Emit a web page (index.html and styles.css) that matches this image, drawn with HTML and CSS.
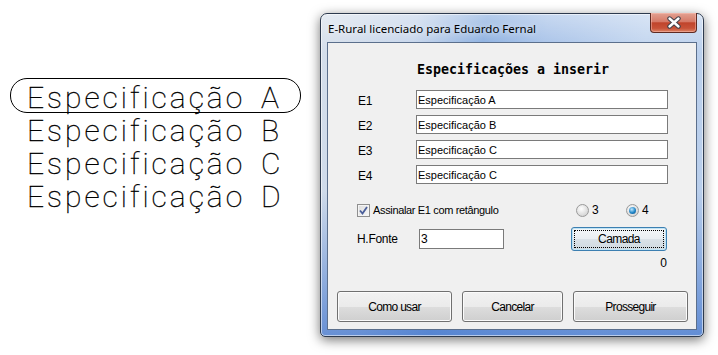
FILE: index.html
```html
<!DOCTYPE html>
<html lang="pt">
<head>
    <meta charset="UTF-8">
    <title>E-Rural</title>
    <link rel="stylesheet" href="styles.css">
</head>
<body>
    <div class="drawing">
        <div class="cad-line marked"><span class="cad-word">Especificação</span><span class="cad-letter">A</span></div>
        <div class="cad-line"><span class="cad-word">Especificação</span><span class="cad-letter">B</span></div>
        <div class="cad-line"><span class="cad-word">Especificação</span><span class="cad-letter">C</span></div>
        <div class="cad-line"><span class="cad-word">Especificação</span><span class="cad-letter">D</span></div>
    </div>

    <div class="window">
        <div class="titlebar">
            <span class="title">E-Rural licenciado para Eduardo Fernal</span>
            <button class="close-btn" type="button">
                <svg width="16" height="13" viewBox="0 0 16 13">
                    <path d="M3.5 2.5 L12.5 10.5 M12.5 2.5 L3.5 10.5" stroke="#40404a" stroke-width="4.4" stroke-linecap="round"/>
                    <path d="M3.5 2.5 L12.5 10.5 M12.5 2.5 L3.5 10.5" stroke="#ffffff" stroke-width="2.4" stroke-linecap="round"/>
                </svg>
            </button>
        </div>
        <div class="client">
            <h2 class="heading">Especificações a inserir</h2>

            <div class="fields">
                <label for="e1">E1</label>
                <input type="text" id="e1" value="Especificação A">
                <label for="e2">E2</label>
                <input type="text" id="e2" value="Especificação B">
                <label for="e3">E3</label>
                <input type="text" id="e3" value="Especificação C">
                <label for="e4">E4</label>
                <input type="text" id="e4" value="Especificação C">
            </div>

            <div class="options">
                <label class="check">
                    <span class="check-box">
                        <svg width="9" height="9" viewBox="0 0 9 9">
                            <path d="M1 4.5 L3.5 7.5 L8 1" fill="none" stroke="#4a5e9a" stroke-width="1.8"/>
                        </svg>
                    </span>
                    Assinalar E1 com retângulo
                </label>
                <label class="radio"><span class="radio-dot"></span>3</label>
                <label class="radio"><span class="radio-dot on"></span>4</label>
            </div>

            <div class="font-row">
                <label for="hfonte">H.Fonte</label>
                <input type="text" id="hfonte" class="small-input" value="3">
                <button type="button" class="camada-btn"><span>Camada</span></button>
            </div>

            <div class="layer-count">0</div>

            <div class="actions">
                <button type="button" class="win-btn wide">Como usar</button>
                <button type="button" class="win-btn">Cancelar</button>
                <button type="button" class="win-btn wide">Prosseguir</button>
            </div>
        </div>
    </div>
</body>
</html>
```

FILE: styles.css
```css
body {
    margin: 0;
    width: 718px;
    height: 355px;
    overflow: hidden;
    background-color: #fff;
    display: flex;
    font-family: "Liberation Sans", Arial, sans-serif;
    font-size: 11px;
    color: #000;
}

/* CAD drawing on the left */
.drawing {
    width: 310px;
    flex: none;
    padding: 81px 0 0 10px;
}
.cad-line {
    display: flex;
    align-items: center;
    height: 33px;
    padding-left: 17px;
    font-family: "Roboto", "DejaVu Sans", sans-serif;
    font-weight: 100;
    font-size: 30px;
    letter-spacing: 3px;
    color: #000;
    -webkit-text-stroke: 0.35px #000;
}
.cad-line.marked {
    position: relative;
}
.cad-line.marked::before {
    content: "";
    position: absolute;
    left: 0;
    top: -3px;
    width: 289px;
    height: 33px;
    border: 1px solid #000;
    border-radius: 17px;
}
.cad-word {
    width: 234px;
}

/* window frame */
.window {
    flex: none;
    margin-top: 13px;
    width: 384px;
    height: 324px;
    box-sizing: border-box;
    border: 1px solid #2d3a4e;
    border-radius: 7px 7px 5px 5px;
    padding: 0 6px 6px 6px;
    display: flex;
    flex-direction: column;
    background:
        linear-gradient(to bottom, rgba(255, 255, 255, 0.4), rgba(255, 255, 255, 0) 12%),
        linear-gradient(to bottom, rgba(80, 130, 210, 0) 55%, rgba(70, 120, 205, 0.75) 100%),
        linear-gradient(100deg, #d6dfea 0%, #c3d3ea 22%, #85abde 38%, #a3bfe7 52%, #bfd3ee 75%, #b7cdeb 100%);
    box-shadow: inset 0 0 0 1px rgba(255, 255, 255, 0.55), 0 3px 12px rgba(0, 0, 0, 0.55);
}
.titlebar {
    height: 28px;
    display: flex;
    align-items: flex-start;
    justify-content: space-between;
}
.title {
    font-family: "Noto Sans", "Open Sans", sans-serif;
    font-size: 11.5px;
    margin: 7px 0 0 1px;
    color: #000;
    text-shadow: 0 0 6px rgba(255, 255, 255, 0.9);
}
.close-btn {
    width: 47px;
    height: 20px;
    margin: -1px 0 0 0;
    border: 1px solid #5e2a22;
    border-top: none;
    border-radius: 0 0 4px 4px;
    background: linear-gradient(to bottom, #e3a292 0%, #d67a68 45%, #c0442c 52%, #c85238 80%, #dc8466 100%);
    box-shadow: inset 0 0 0 1px rgba(255, 200, 190, 0.45);
    display: flex;
    align-items: center;
    justify-content: center;
    padding: 0;
}

/* client area */
.client {
    flex: 1;
    border: 1px solid #5b6f8c;
    background-color: #f0f0f0;
    display: flex;
    flex-direction: column;
    padding: 0 29px;
}
.heading {
    margin: 19px 0 0 0;
    height: 16px;
    line-height: 16px;
    text-align: center;
    font-family: "DejaVu Sans Mono", monospace;
    font-weight: bold;
    font-size: 13.3px;
    padding-left: 2px;
}
.fields {
    margin-top: 12px;
    display: grid;
    grid-template-columns: 59px 252px;
    grid-auto-rows: 19px;
    row-gap: 6px;
    align-items: center;
}
.fields label {
    padding-left: 1px;
    padding-top: 2px;
    font-size: 12px;
    letter-spacing: -0.3px;
}
input[type="text"] {
    box-sizing: border-box;
    height: 19px;
    border: 1px solid #7a7a7a;
    background: #fff;
    font-family: "Liberation Sans", Arial, sans-serif;
    font-size: 11px;
    padding: 0 0 0 1px;
    margin: 0;
}

.options {
    margin-top: 19px;
    display: flex;
    align-items: center;
    height: 14px;
}
.check {
    flex: none;
    display: flex;
    align-items: center;
    gap: 3px;
    width: 219px;
    letter-spacing: -0.35px;
}
.check-box {
    box-sizing: border-box;
    width: 13px;
    height: 13px;
    border: 1px solid #8f8f8f;
    background: linear-gradient(135deg, #dcdcdc, #f8f8f8);
    box-shadow: inset 0 0 0 1px #f4f4f4;
    display: flex;
    align-items: center;
    justify-content: center;
}
.radio {
    flex: none;
    display: flex;
    align-items: center;
    gap: 3px;
    width: 50px;
    font-size: 12px;
}
.radio-dot {
    box-sizing: border-box;
    width: 13px;
    height: 13px;
    border-radius: 50%;
    border: 1px solid #9a9a9a;
    background: radial-gradient(circle at 40% 35%, #ffffff, #d8d8d8 70%, #c4c4c4);
    position: relative;
}
.radio-dot.on::after {
    content: "";
    position: absolute;
    left: 2px;
    top: 2px;
    width: 7px;
    height: 7px;
    border-radius: 50%;
    background: radial-gradient(circle at 40% 35%, #bfe8ff, #1f84c6 55%, #0d4f86);
}

.font-row {
    margin-top: 10px;
    display: flex;
    align-items: center;
    height: 24px;
}
.font-row label {
    flex: none;
    width: 62px;
    font-size: 12px;
    letter-spacing: -0.3px;
}
.small-input {
    flex: none;
    width: 85px;
    height: 20px !important;
    font-size: 12px !important;
}
.camada-btn {
    flex: none;
    margin-left: 67px;
    width: 96px;
    height: 24px;
    box-sizing: border-box;
    border: 1px solid #3c7fb1;
    border-radius: 3px;
    background: linear-gradient(to bottom, #f4f7f9 0%, #e9eef2 50%, #dae2e8 51%, #d0d9e0 100%);
    box-shadow: inset 0 0 0 1px #bfe3f5;
    padding: 2px;
    font-family: "Liberation Sans", Arial, sans-serif;
    font-size: 12px;
    letter-spacing: -0.6px;
}
.camada-btn span {
    display: block;
    height: 100%;
    box-sizing: border-box;
    border: 1px dotted #000;
    line-height: 16px;
}

.layer-count {
    margin-top: 5px;
    text-align: right;
    height: 14px;
    font-size: 12px;
}

.actions {
    margin: 21px -29px 0 -29px;
    padding-left: 9px;
    display: flex;
    gap: 10px;
}
.win-btn {
    flex: none;
    width: 101px;
    height: 31px;
    box-sizing: border-box;
    border: 1px solid #707070;
    border-radius: 3px;
    background: linear-gradient(to bottom, #f2f2f2 0%, #ebebeb 50%, #dddddd 51%, #cfcfcf 100%);
    box-shadow: inset 0 0 0 1px #fbfbfb;
    font-family: "Liberation Sans", Arial, sans-serif;
    font-size: 12px;
    letter-spacing: -0.7px;
    padding: 0;
}
.win-btn.wide {
    width: 115px;
}
```
